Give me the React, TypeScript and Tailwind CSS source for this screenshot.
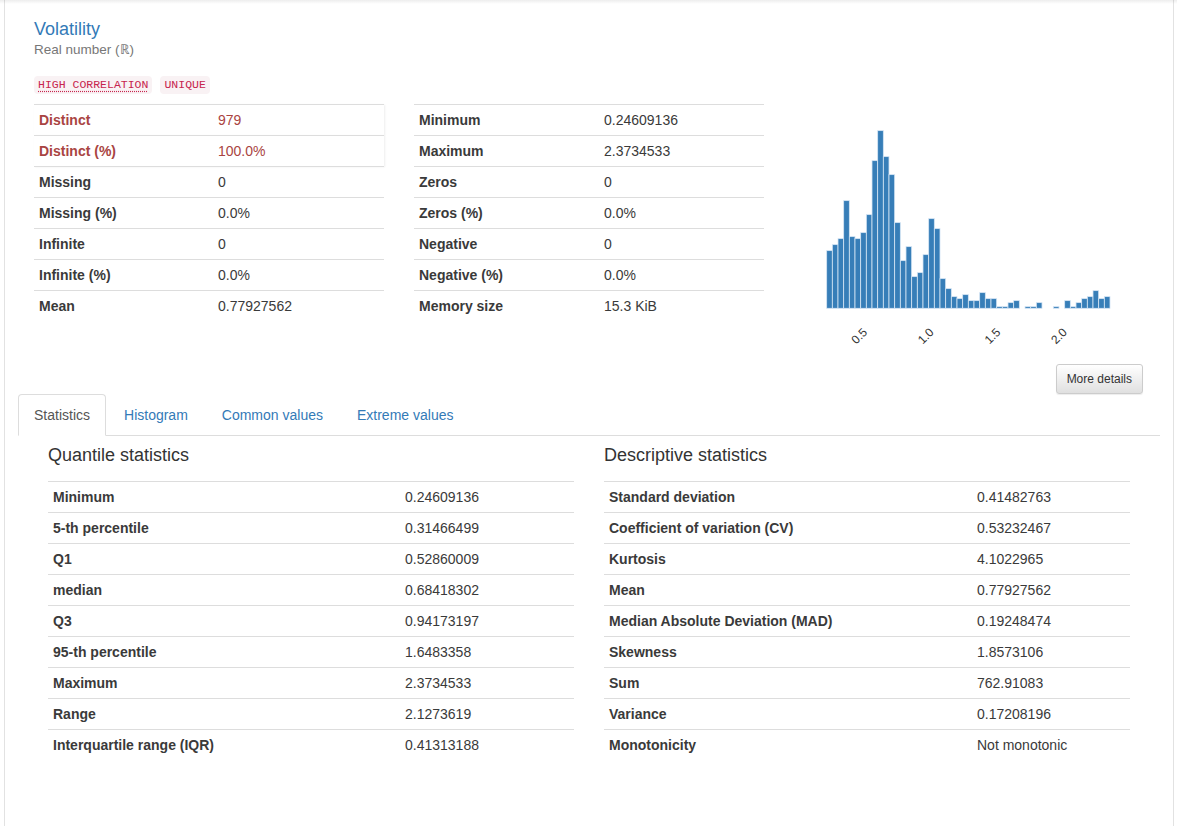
import React from "react";

const h3 = [422,404,386,272,380,386,368,314,152,62,140,194,338,452,410,500,488,434,326,356,506,536,560,566,554,572,572,548,566,566,590,590,578,572,595,590,590,578,595,595,590,595,572,590,578,566,560,542,566,560];

type Row = { k: string; v: string; danger?: boolean };

const topLeft: Row[] = [
  { k: "Distinct", v: "979", danger: true },
  { k: "Distinct (%)", v: "100.0%", danger: true },
  { k: "Missing", v: "0" },
  { k: "Missing (%)", v: "0.0%" },
  { k: "Infinite", v: "0" },
  { k: "Infinite (%)", v: "0.0%" },
  { k: "Mean", v: "0.77927562" },
];

const topMid: Row[] = [
  { k: "Minimum", v: "0.24609136" },
  { k: "Maximum", v: "2.3734533" },
  { k: "Zeros", v: "0" },
  { k: "Zeros (%)", v: "0.0%" },
  { k: "Negative", v: "0" },
  { k: "Negative (%)", v: "0.0%" },
  { k: "Memory size", v: "15.3 KiB" },
];

const quantile: Row[] = [
  { k: "Minimum", v: "0.24609136" },
  { k: "5-th percentile", v: "0.31466499" },
  { k: "Q1", v: "0.52860009" },
  { k: "median", v: "0.68418302" },
  { k: "Q3", v: "0.94173197" },
  { k: "95-th percentile", v: "1.6483358" },
  { k: "Maximum", v: "2.3734533" },
  { k: "Range", v: "2.1273619" },
  { k: "Interquartile range (IQR)", v: "0.41313188" },
];

const descriptive: Row[] = [
  { k: "Standard deviation", v: "0.41482763" },
  { k: "Coefficient of variation (CV)", v: "0.53232467" },
  { k: "Kurtosis", v: "4.1022965" },
  { k: "Mean", v: "0.77927562" },
  { k: "Median Absolute Deviation (MAD)", v: "0.19248474" },
  { k: "Skewness", v: "1.8573106" },
  { k: "Sum", v: "762.91083" },
  { k: "Variance", v: "0.17208196" },
  { k: "Monotonicity", v: "Not monotonic" },
];

function Table({ rows, labelW }: { rows: Row[]; labelW: string }) {
  return (
    <div className="flex flex-col">
      {rows.map((r, i) => (
        <div
          key={i}
          className={
            r.danger
              ? "flex h-[31px] border-t border-[#ddd] leading-[20px] py-[5px] text-[#a94442] bg-white shadow-[1px_1px_2px_rgba(0,0,0,0.07)]"
              : "flex h-[31px] border-t border-[#ddd] leading-[20px] py-[5px] text-[#3a3a3a]"
          }
        >
          <div className={`${labelW} shrink-0 px-[5px] font-bold`}>{r.k}</div>
          <div className="px-[5px] whitespace-nowrap">{r.v}</div>
        </div>
      ))}
    </div>
  );
}

function Histogram() {
  const x0 = 32.67;
  const step = 17 / 3;
  const base = 204.3;
  const ticks = ["0.5", "1.0", "1.5", "2.0"];
  return (
    <svg width="350" height="260" viewBox="0 0 350 260">
      {h3.map((t, i) => {
        const h = (595 - t) / 3;
        if (h <= 0) return null;
        return (
          <rect
            key={i}
            x={x0 + i * step}
            y={base - h}
            width={step}
            height={h}
            fill="#377eb8"
            stroke="#d6e6f5"
            strokeWidth="0.8"
          />
        );
      })}
      {ticks.map((t, i) => {
        const ax = 74 + i * 66.6;
        const ay = 229;
        return (
          <text
            key={t}
            x={ax}
            y={ay}
            textAnchor="end"
            fontSize="12"
            fill="#333"
            fontFamily="'Liberation Sans', Arial, sans-serif"
            transform={`rotate(-45 ${ax} ${ay})`}
          >
            {t}
          </text>
        );
      })}
    </svg>
  );
}

export default function App() {
  const tabs = ["Statistics", "Histogram", "Common values", "Extreme values"];
  return (
    <div className="relative min-h-[826px] bg-white font-['Liberation_Sans',Arial,sans-serif] text-[14px] text-[#333]">
      <div className="pointer-events-none absolute inset-x-0 top-0 h-[4px] bg-gradient-to-b from-[rgba(0,0,0,0.07)] to-transparent" />
      <div className="ml-[4px] w-[1170px] min-h-[826px] border-x border-[#e2e2e2] px-[13px]">
        {/* header */}
        <div className="pl-[16px] pt-[19px]">
          <div className="text-[18px] leading-[20px] text-[#337ab7]">Volatility</div>
          <div className="mt-[1px] text-[13.5px] leading-[20px] text-[#777]">Real number (ℝ)</div>
          <div className="mt-[16px] flex gap-[8px]">
            <span className="flex h-[18px] items-center rounded-[4px] bg-[#f9f2f4] px-[4px] font-['Liberation_Mono',monospace] text-[11.5px] text-[#c7254e] underline decoration-dotted underline-offset-[3px]">
              HIGH CORRELATION
            </span>
            <span className="flex h-[18px] items-center rounded-[4px] bg-[#f9f2f4] px-[4px] font-['Liberation_Mono',monospace] text-[11.5px] text-[#c7254e]">
              UNIQUE
            </span>
          </div>
        </div>
        {/* top row */}
        <div className="mt-[10px] flex gap-[30px] pl-[16px]">
          <div className="w-[350px]">
            <Table rows={topLeft} labelW="w-[179px]" />
          </div>
          <div className="w-[350px]">
            <Table rows={topMid} labelW="w-[185px]" />
          </div>
          <div className="flex w-[350px] flex-col">
            <Histogram />
            <button className="ml-auto mr-[1px] h-[30px] rounded-[3px] border border-[#ccc] bg-gradient-to-b from-white to-[#e0e0e0] px-[10px] text-[12px] text-[#333] shadow-[inset_0_1px_0_rgba(255,255,255,0.15),0_1px_1px_rgba(0,0,0,0.075)]">
              More details
            </button>
          </div>
        </div>
        {/* tabs */}
        <div className="flex border-b border-[#ddd]">
          {tabs.map((t, i) => (
            <div key={t} className="mb-[-1px] mr-[2px]">
              <div
                className={
                  i === 0
                    ? "rounded-t-[4px] border border-[#ddd] border-b-white bg-white px-[15px] py-[10px] leading-[20px] text-[#555]"
                    : "rounded-t-[4px] border border-transparent px-[15px] py-[10px] leading-[20px] text-[#337ab7]"
                }
              >
                {t}
              </div>
            </div>
          ))}
        </div>
        {/* tab content */}
        <div className="flex gap-[30px] pl-[30px]">
          <div className="w-[526px]">
            <div className="mt-[9px] mb-[16px] text-[18px] leading-[20px] text-[#333]">Quantile statistics</div>
            <Table rows={quantile} labelW="w-[352px]" />
          </div>
          <div className="w-[526px]">
            <div className="mt-[9px] mb-[16px] text-[18px] leading-[20px] text-[#333]">Descriptive statistics</div>
            <Table rows={descriptive} labelW="w-[368px]" />
          </div>
        </div>
      </div>
    </div>
  );
}
